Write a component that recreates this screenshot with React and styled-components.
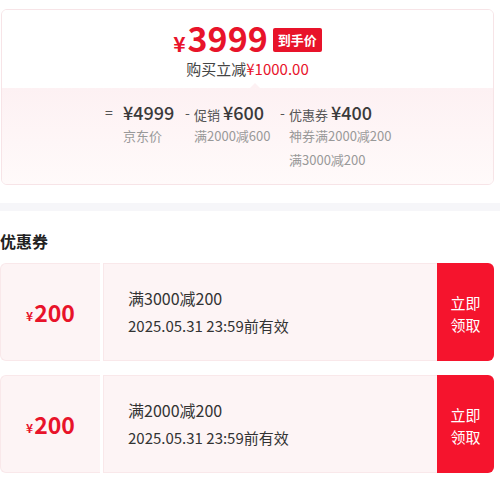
import styled, { createGlobalStyle } from 'styled-components';

const Global = createGlobalStyle`
  body {
    margin: 0;
    background: #fff;
    font-family: "Noto Sans CJK SC", "Noto Sans", sans-serif;
    color: #333;
  }
`;

const Page = styled.div`
  width: 500px;
  padding-top: 9px;
`;

const Card = styled.div`
  margin: 0 6px 0 1px;
  border: 1px solid #f7e4e7;
  border-radius: 6px;
  overflow: hidden;
  height: 176px;
  box-sizing: border-box;
  display: flex;
  flex-direction: column;
`;

const Top = styled.div`
  height: 78px;
  display: flex;
  flex-direction: column;
  align-items: center;
  padding-top: 13px;
  box-sizing: border-box;
  background: #fff;
  position: relative;
  &::after {
    content: '';
    position: absolute;
    left: 248px;
    bottom: 0;
    border: 5px solid transparent;
    border-bottom-color: #fdf1f3;
  }
`;

const PriceRow = styled.div`
  display: flex;
  align-items: center;
  gap: 5px;
  height: 34px;
`;

const Price = styled.div`
  color: #e8132a;
  font-weight: 600;
  font-size: 34px;
  line-height: 34px;
  display: flex;
  align-items: baseline;
  span {
    font-size: 21px;
    margin-right: 2px;
  }
`;

const Badge = styled.div`
  background: #e8132a;
  color: #fff;
  font-weight: 700;
  font-size: 13px;
  line-height: 24px;
  padding: 0 5px;
  border-radius: 2px;
`;

const Save = styled.div`
  font-size: 15px;
  line-height: 18px;
  margin-top: 3px;
  color: #444;
  span {
    color: #e8132a;
  }
`;

const Bottom = styled.div`
  flex: 1;
  background: linear-gradient(#fdf1f3, #fffafa);
  display: flex;
  padding: 12px 0 0 103px;
  box-sizing: border-box;
`;

const Op = styled.div`
  width: ${p => p.$w}px;
  font-size: 14px;
  line-height: 24px;
  color: #555;
`;

const Col = styled.div`
  width: ${p => p.$w}px;
  display: flex;
  flex-direction: column;
`;

const Amount = styled.div`
  display: flex;
  align-items: baseline;
  gap: 3px;
  height: 24px;
  font-size: 18px;
  font-weight: 500;
  line-height: 24px;
  color: #3a3a3a;
  small {
    font-size: 13px;
    font-weight: 400;
    color: #555;
  }
`;

const Note = styled.div`
  font-size: 13px;
  line-height: 24px;
  color: #999;
`;

const Band = styled.div`
  height: 8px;
  background: #f6f6f9;
  margin-top: 18px;
`;

const Title = styled.div`
  font-size: 16px;
  font-weight: 700;
  color: #222;
  line-height: 22px;
  margin: 19px 0 11px;
`;

const List = styled.div`
  display: flex;
  flex-direction: column;
  gap: 14px;
  margin-right: 6px;
`;

const Coupon = styled.div`
  display: flex;
  height: 98px;
`;

const Stub = styled.div`
  width: 100px;
  background: #fdf4f5;
  border: 1px solid #f9e8ea;
  border-right: none;
  border-radius: 6px 0 0 6px;
  box-sizing: border-box;
  display: flex;
  align-items: center;
  justify-content: center;
  color: #e8132a;
  font-weight: 600;
  font-size: 23px;
  span {
    font-size: 12px;
    margin-top: 6px;
    margin-right: 1px;
  }
`;

const Body = styled.div`
  flex: 1;
  margin-left: 3px;
  background: #fdf4f5;
  border: 1px solid #f9e8ea;
  border-right: none;
  box-sizing: border-box;
  display: flex;
  flex-direction: column;
  justify-content: center;
  padding-left: 24px;
  font-size: 15px;
  line-height: 28px;
  color: #333;
`;

const Rule = styled.div`
  font-size: 16px;
`;

const Take = styled.div`
  width: 57px;
  background: #f5142d;
  border-radius: 0 6px 6px 0;
  color: #fff;
  font-size: 15px;
  line-height: 22px;
  display: flex;
  align-items: center;
  justify-content: center;
  text-align: center;
  padding-top: 4px;
  box-sizing: border-box;
`;

const coupons = [
  { rule: '满3000减200', until: '2025.05.31 23:59前有效' },
  { rule: '满2000减200', until: '2025.05.31 23:59前有效' },
];

export default function App() {
  return (
    <Page>
      <Global />
      <Card>
        <Top>
          <PriceRow>
            <Price><span>¥</span>3999</Price>
            <Badge>到手价</Badge>
          </PriceRow>
          <Save>购买立减<span>¥1000.00</span></Save>
        </Top>
        <Bottom>
          <Op $w={18}>=</Op>
          <Col $w={62}>
            <Amount>¥4999</Amount>
            <Note>京东价</Note>
          </Col>
          <Op $w={9}>-</Op>
          <Col $w={86}>
            <Amount><small>促销</small>¥600</Amount>
            <Note>满2000减600</Note>
          </Col>
          <Op $w={9}>-</Op>
          <Col $w={120}>
            <Amount><small>优惠券</small>¥400</Amount>
            <Note>神券满2000减200</Note>
            <Note>满3000减200</Note>
          </Col>
        </Bottom>
      </Card>
      <Band />
      <Title>优惠券</Title>
      <List>
        {coupons.map(c => (
          <Coupon key={c.rule}>
            <Stub><span>¥</span>200</Stub>
            <Body>
              <Rule>{c.rule}</Rule>
              <div>{c.until}</div>
            </Body>
            <Take>立即<br />领取</Take>
          </Coupon>
        ))}
      </List>
    </Page>
  );
}
